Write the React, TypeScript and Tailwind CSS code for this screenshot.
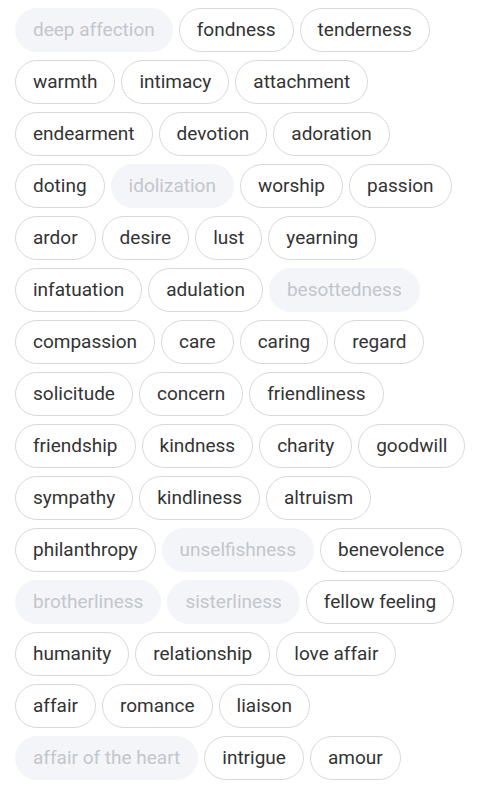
const WORDS: [string, boolean][] = [
  ['deep affection', true],
  ['fondness', false],
  ['tenderness', false],
  ['warmth', false],
  ['intimacy', false],
  ['attachment', false],
  ['endearment', false],
  ['devotion', false],
  ['adoration', false],
  ['doting', false],
  ['idolization', true],
  ['worship', false],
  ['passion', false],
  ['ardor', false],
  ['desire', false],
  ['lust', false],
  ['yearning', false],
  ['infatuation', false],
  ['adulation', false],
  ['besottedness', true],
  ['compassion', false],
  ['care', false],
  ['caring', false],
  ['regard', false],
  ['solicitude', false],
  ['concern', false],
  ['friendliness', false],
  ['friendship', false],
  ['kindness', false],
  ['charity', false],
  ['goodwill', false],
  ['sympathy', false],
  ['kindliness', false],
  ['altruism', false],
  ['philanthropy', false],
  ['unselfishness', true],
  ['benevolence', false],
  ['brotherliness', true],
  ['sisterliness', true],
  ['fellow feeling', false],
  ['humanity', false],
  ['relationship', false],
  ['love affair', false],
  ['affair', false],
  ['romance', false],
  ['liaison', false],
  ['affair of the heart', true],
  ['intrigue', false],
  ['amour', false],
];

export default function App() {
  return (
    <div className="min-h-screen bg-white pl-[15px] pr-[10px] pt-[8px] font-['Roboto',sans-serif]">
      <div className="flex flex-wrap gap-x-[6px] gap-y-[8px]">
        {WORDS.map(([word, muted]) => (
          <span
            key={word}
            className={
              muted
                ? 'h-[44px] px-[17px] pt-px inline-flex items-center rounded-full border border-[#f3f5f8] bg-[#f3f5f8] text-[19px] text-[#c3c6cc]'
                : 'h-[44px] px-[17px] pt-px inline-flex items-center rounded-full border border-[#d9d9d9] bg-white text-[19px] text-[#333333]'
            }
          >
            {word}
          </span>
        ))}
      </div>
    </div>
  );
}
